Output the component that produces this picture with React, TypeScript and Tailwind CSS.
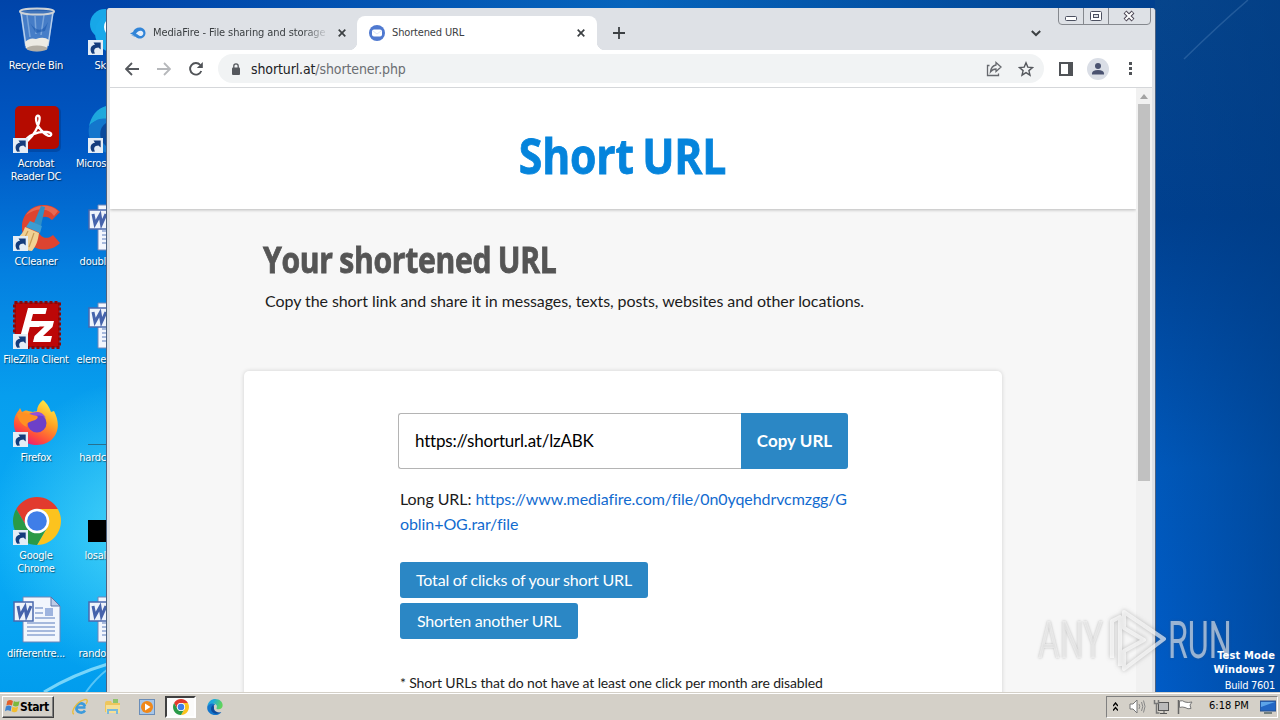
import React from 'react';

const ShortcutArrow = () => (
    <svg className="absolute bottom-0 left-0 h-[15px] w-[15px]" viewBox="0 0 15 15">
        <rect width="15" height="15" fill="#e4edf6" />
        <path d="M4.200 13.800C1 9.500 3 5 7 4.800L5.500 2.400h7.200v7l-2.300-2C6.500 7.500 5.200 10 7 13.400z" fill="#143c7c" />
    </svg>
);

const RecycleBinIcon = () => (
    <svg className="h-12 w-12" viewBox="0 0 48 48">
        <path d="M7 4l5 37q12 7 23 0l6-37z" fill="#7fa9dc" fillOpacity=".55" />
        <path d="M8 5l5 34" stroke="#b7cfec" strokeWidth="1.500" fill="none" />
        <path d="M40 5l-5 34" stroke="#b7cfec" strokeWidth="1.500" fill="none" />
        <path d="M14 8l3 22M22 9l1 18M31 8l-3 20" stroke="#9dc0e8" strokeWidth="1.500" opacity=".6" />
        <path d="M17 16c7 9 13 9 18-1l-3 9-9 2z" fill="#1f5cb0" opacity=".65" />
        <path d="M12 35q5-5 11-3 8-3 13 1l-2 8q-11 6-21 0z" fill="#eceae3" />
        <ellipse cx="24" cy="41.500" rx="10.500" ry="3" fill="#b3aea4" />
        <ellipse cx="24" cy="4.500" rx="17" ry="3" fill="#3f70b4" fillOpacity=".7" stroke="#cdd2d6" strokeWidth="2" />
    </svg>
);

const AcrobatIcon = () => (
    <svg className="h-12 w-12" viewBox="0 0 48 48">
        <rect x="3" y="2" width="45" height="45" rx="5" fill="#00337e" opacity=".4" />
        <rect x="2" y="1" width="44" height="43" rx="5" fill="#b50b00" />
        <path
            d="M12 36c2-5 13-10 22-9 6 .6 5 5 1 3.600C29 28 23 20 23 13.500c.3-4.500 4-3.500 3.600.5C26 22 20 31 14.500 36z"
            fill="none"
            stroke="#fff"
            strokeWidth="2.300"
            strokeLinejoin="round"
        />
    </svg>
);

const CCleanerIcon = () => (
    <svg className="h-12 w-12" viewBox="0 0 48 48">
        <path d="M47 9C36-4 10 1 9 23c-1 23 26 30 38 17l-7-8c-7 6-15 2-15-8 0-11 8-13 14-7z" fill="#dd4430" />
        <path d="M45 8C37 0 20 1 13 12c9-7 22-8 28 1z" fill="#ef8068" opacity=".6" />
        <path d="M28 3l4 1-4 19-7-3z" fill="#2f8fc7" />
        <path d="M17 18l12 5-2 7-14-6z" fill="#3c9dd3" />
        <path d="M12 24l14 6c-1 8-3 13-7 18-7 0-14-5-18-12 6-2 9-6 11-12z" fill="#f1d193" />
        <path d="M15 28l-6 12M21 30l-5 14" stroke="#c79a55" strokeWidth="1.200" />
    </svg>
);

const FileZillaIcon = () => (
    <svg className="h-12 w-12" viewBox="0 0 48 48">
        <rect x="1.500" y="1.500" width="45" height="45" fill="#b40808" stroke="#8d0606" strokeWidth="3" strokeDasharray="3 2" />
        <rect x="3" y="3" width="42" height="42" fill="#bc0707" />
        <path d="M15 7h19l-1.500 6H20l-1.800 7h9.500l-1.500 6h-9.400L13 40H6z" fill="#fff" />
        <path d="M25 20h16l-1.500 6-9.500 9h9l-1.500 6H20l1.500-6 10-9.500h-8z" fill="#fff" />
    </svg>
);

const FirefoxIcon = () => (
    <svg className="h-12 w-12" viewBox="0 0 48 48">
        <defs>
            <linearGradient id="ff-body" x1="0.8" y1="0" x2="0.250" y2="1">
                <stop offset="0" stopColor="#fff04a" />
                <stop offset=".4" stopColor="#ffa423" />
                <stop offset=".75" stopColor="#ff4c3c" />
                <stop offset="1" stopColor="#e3157f" />
            </linearGradient>
        </defs>
        <path
            d="M30 1c5 4 7 9 8 12l3-1c10 19-1 34-17 34C9 46 0 35 1 22c.5-4 2-8 5-11l1-2 2 4c2-1 4-2 6-1l5 1c2-1 3 0 4-1 0-4 2-8 6-11z"
            fill="url(#ff-body)"
        />
        <circle cx="24" cy="24" r="9.500" fill="#6d40c8" />
        <path d="M16 15c7-3 13-3 17 4-4-3-8-3-12-1z" fill="#9450d8" />
        <path d="M4 15c8-3 14 1 20 2 2 1 0 4-5 5-5 2-6 3-5 6C8 26 5 20 4 15z" fill="#ff9022" />
    </svg>
);

const ChromeIcon = ({ className }: { className: string }) => (
    <svg className={className} viewBox="0 0 48 48">
        <path d="M24 12h20.780A24 24 0 0 0 3.220 12l10.390 18A12 12 0 0 1 24 12z" fill="#e23b2e" />
        <path d="M34.390 30L24 48a24 24 0 0 0 20.780-36H24a12 12 0 0 1 10.390 18z" fill="#fcc31e" />
        <path d="M13.610 30L3.220 12A24 24 0 0 0 24 48l10.390-18a12 12 0 0 1-20.780 0z" fill="#2a9a47" />
        <circle cx="24" cy="24" r="12.300" fill="#fff" />
        <circle cx="24" cy="24" r="9.800" fill="#3f7ee8" />
    </svg>
);

const EdgeIcon = ({ className }: { className: string }) => (
    <svg className={className} viewBox="0 0 48 48">
        <defs>
            <linearGradient id="edge-top" x1="0" y1="0" x2="1" y2="0.300">
                <stop offset="0" stopColor="#1aa4de" />
                <stop offset=".4" stopColor="#1fa9dd" />
                <stop offset="1" stopColor="#5fd45c" />
            </linearGradient>
        </defs>
        <path d="M1 22C3 8 13 0 25 0c13 0 22 9 22 19 0 8-6 12-12 12-5 0-8-2-6-5 3-6-2-12-9-12C11 14 3 17 1 22z" fill="url(#edge-top)" />
        <path d="M1 22c4-8 17-12 24-5-9 1-12 10-9 17 4 9 16 12 27 5C34 52 14 51 5 39 1 34 0 28 1 22z" fill="#1376cc" />
        <path d="M20 17c-9 4-10 15-4 22 7 8 19 6 27 0-11 4-24-3-22-14z" fill="#0c4a9c" />
    </svg>
);

const WordDocIcon = () => (
    <svg className="h-12 w-12" viewBox="0 0 48 48">
        <path d="M10 2h28l9 9v36H10z" fill="#f2f6fd" stroke="#6e86b8" />
        <path d="M38 2v9h9z" fill="#bccbe6" stroke="#5a74a8" />
        <path d="M14 28h28M14 32h28M14 36h28M14 40h28M22 13h8M22 18h8M22 23h20" stroke="#8da5d2" strokeWidth="1.300" />
        <rect x="32" y="13" width="8" height="8" fill="#9eb4df" />
        <rect x="1" y="7" width="19" height="19" fill="#eef3fb" stroke="#4a68ad" strokeWidth="1.500" />
        <path d="M5 11l2 10L12 12l1.500 9L18 11" fill="none" stroke="#4563ac" strokeWidth="3" />
    </svg>
);

const SkypeIcon = () => (
    <svg className="h-12 w-12" viewBox="0 0 48 48">
        <circle cx="17" cy="17" r="15" fill="#17a7e8" />
        <circle cx="27" cy="26" r="20" fill="#18a9ea" />
        <circle cx="26" cy="20" r="8" fill="none" stroke="#fff" strokeWidth="4" />
    </svg>
);

interface DesktopItemProps {
    label: string;
    icon: React.ReactNode;
    className: string;
    shortcut?: boolean;
}

const DesktopItem: React.FC<DesktopItemProps> = ({ label, icon, className, shortcut }) => (
    <div className={`absolute flex w-[76px] flex-col items-center ${className}`}>
        <div className="relative ml-[2px] h-12 w-12">
            {icon}
            {shortcut && <ShortcutArrow />}
        </div>
        <span className="mt-1 whitespace-pre text-center text-[11px] leading-[13px] tracking-[-0.25px] [text-shadow:1px_1px_1px_rgba(0,0,0,0.5)]">
            {label}
        </span>
    </div>
);

// second column, cut off by the browser window
const ClippedItem: React.FC<Partial<DesktopItemProps>> = ({ label, icon, className, shortcut }) => (
    <div className={`absolute left-[76px] w-[30px] overflow-hidden ${className}`}>
        <div className="relative ml-3 h-12 w-12">
            {icon}
            {shortcut && <ShortcutArrow />}
        </div>
        <div className="mt-1 text-right text-[11px] leading-[13px] tracking-[-0.25px] [text-shadow:1px_1px_1px_rgba(0,0,0,0.5)]">
            {label}
        </div>
    </div>
);

const Wallpaper = () => (
    <svg className="absolute inset-0 h-[720px] w-[1280px]" viewBox="0 0 1280 720">
        <defs>
            <linearGradient id="wp-left" x1="0" y1="0" x2="0" y2="1">
                <stop offset="0" stopColor="#0044a9" />
                <stop offset=".2" stopColor="#0058c4" />
                <stop offset=".38" stopColor="#0480e0" />
                <stop offset=".55" stopColor="#079eee" />
                <stop offset=".75" stopColor="#0aacf6" />
                <stop offset="1" stopColor="#009aec" />
            </linearGradient>
            <radialGradient id="wp-glow" cx="140" cy="530" r="150" gradientUnits="userSpaceOnUse">
                <stop offset="0" stopColor="#5ae0f8" stopOpacity=".75" />
                <stop offset="1" stopColor="#5ae0f8" stopOpacity="0" />
            </radialGradient>
            <linearGradient id="wp-right" x1="0" y1="0" x2="0" y2="1">
                <stop offset="0" stopColor="#06458c" />
                <stop offset=".3" stopColor="#00408f" />
                <stop offset=".65" stopColor="#0058ba" />
                <stop offset="1" stopColor="#005cc8" />
            </linearGradient>
            <linearGradient id="wp-shade" x1="0" y1="0" x2="1" y2="0">
                <stop offset="0" stopColor="#003a80" stopOpacity="0" />
                <stop offset="1" stopColor="#003a80" stopOpacity=".5" />
            </linearGradient>
            <linearGradient id="wp-top" x1="0" y1="0" x2="1" y2="0">
                <stop offset="0" stopColor="#0044a9" />
                <stop offset=".5" stopColor="#0664bc" />
                <stop offset="1" stopColor="#00408f" />
            </linearGradient>
        </defs>
        <rect width="640" height="720" fill="url(#wp-left)" />
        <rect width="300" height="720" fill="url(#wp-glow)" />
        <rect x="640" width="640" height="720" fill="url(#wp-right)" />
        <rect x="1155" width="125" height="720" fill="url(#wp-shade)" />
        <rect x="106" width="1049" height="8" fill="url(#wp-top)" />
        <path d="M1184 59Q1220 24 1248 0" stroke="#4f83b8" strokeWidth="1.500" opacity=".4" fill="none" />
        <path d="M44 692Q74 674 108 664" stroke="#a8ecff" strokeWidth="3" opacity=".7" fill="none" />
        <path d="M86 692Q96 678 108 669" stroke="#a8ecff" strokeWidth="2" opacity=".5" fill="none" />
    </svg>
);

const CloseX = ({ className }: { className: string }) => (
    <svg className={className} viewBox="0 0 8 8">
        <path d="M.7.7l6.600 6.600M7.300.7L.7 7.300" stroke="#3c4043" strokeWidth="1.700" />
    </svg>
);

const TabStrip = () => (
    <div className="flex h-[42px] items-start bg-[#dee1e6] pl-[23px]">
        <div className="mt-2 flex h-[34px] w-[227px] items-center">
            <svg className="h-4 w-4 shrink-0" viewBox="0 0 16 16">
                <path d="M0 8.500l3-1.500C4 4 6.500 2.500 9.500 2.500c3.800 0 6 2.600 6 5.500s-2.200 5.500-5.500 5.500c-2 0-3.500-.6-4.500-1.800L1 10.500h3.500z" fill="#3285d8" />
                <path d="M6 9c1-3 5-4.500 7-2 1 2-.5 4-2.500 4S8 9 6 9z" fill="#e4eefa" />
            </svg>
            <div className="ml-[7px] w-[173px] whitespace-nowrap text-[11px] tracking-[-0.1px] text-[#3c4043] [mask-image:linear-gradient(to_right,black_150px,transparent_176px)]">
                MediaFire - File sharing and storage
            </div>
            <CloseX className="ml-3 h-2 w-2 shrink-0" />
        </div>
        <div className="relative mt-2 flex h-[34px] w-[240px] items-center rounded-t-lg bg-white pl-3 before:absolute before:bottom-0 before:-left-2 before:h-2 before:w-2 before:bg-[radial-gradient(circle_at_0_0,transparent_8px,white_8.5px)] after:absolute after:-right-2 after:bottom-0 after:h-2 after:w-2 after:bg-[radial-gradient(circle_at_100%_0,transparent_8px,white_8.5px)]">
            <svg className="h-4 w-4" viewBox="0 0 16 16">
                <circle cx="8" cy="8" r="8" fill="#4f79d0" />
                <rect x="3" y="4.500" width="10" height="7" rx="2" fill="#fff" />
                <path d="M4 6l4 3 4-3" stroke="#dbe4f6" fill="none" />
            </svg>
            <span className="ml-[7px] text-[11px] tracking-[-0.15px] text-[#3c4043]">Shortened URL</span>
            <CloseX className="mr-3 ml-auto h-2 w-2" />
        </div>
        <svg className="mt-[19px] ml-4 h-3 w-3" viewBox="0 0 12 12">
            <path d="M6 0v12M0 6h12" stroke="#3c4043" strokeWidth="1.800" />
        </svg>
        <svg className="mt-[22px] ml-[406px] h-[7px] w-[10px]" viewBox="0 0 10 7">
            <path d="M.8 1l4.200 4 4.200-4" stroke="#3c4043" strokeWidth="2" fill="none" />
        </svg>
        <svg className="ml-[17px] h-[17px] w-[93px]" viewBox="0 0 93 17">
            <path d="M.5 0v13q0 3.500 3.500 3.500h85q3.500 0 3.500-3.500V0M25.500 0v16M50.500 0v16" fill="#dee1e6" stroke="#85888e" />
            <rect x="7.500" y="8.500" width="11" height="4" rx="1" fill="#fff" stroke="#4c5060" />
            <rect x="32.500" y="3.500" width="11" height="9" rx="1" fill="#fff" stroke="#4c5060" />
            <rect x="35.500" y="6.500" width="5" height="3" fill="#dee1e6" stroke="#4c5060" />
            <path d="M67 4l8 8M75 4l-8 8" stroke="#4c4654" strokeWidth="4" />
            <path d="M67.500 4.500l7 7M74.500 4.500l-7 7" stroke="#fff" strokeWidth="2" />
        </svg>
    </div>
);

const Toolbar = () => (
    <div className="mx-[3px] flex h-[38px] items-center border-b border-[#d5d7da] bg-white text-[#5f6368]">
        <svg className="ml-[15px] h-[14px] w-[14px]" viewBox="0 0 14 14">
            <path d="M14 7H1.500M7 1L1 7l6 6" stroke="#55585d" strokeWidth="1.800" fill="none" />
        </svg>
        <svg className="ml-[18px] h-[14px] w-[14px]" viewBox="0 0 14 14">
            <path d="M0 7h12.500M7 1l6 6-6 6" stroke="#b6b8bb" strokeWidth="1.800" fill="none" />
        </svg>
        <svg className="ml-[18px] h-[14px] w-[14px]" viewBox="0 0 14 14">
            <path d="M12.300 9A5.800 5.800 0 1 1 11.300 3" stroke="#505357" strokeWidth="1.900" fill="none" />
            <path d="M13.800 0v6H7.800z" fill="#505357" />
        </svg>
        <div className="ml-[15px] flex h-[29px] w-[826px] items-center rounded-full bg-[#f1f3f4]">
            <svg className="ml-[14px] h-3 w-2" viewBox="0 0 8 12">
                <rect y="4.500" width="8" height="7.500" rx="1" fill="#55585d" />
                <path d="M1.800 5V3a2.200 2.200 0 0 1 4.400 0v2" stroke="#55585d" strokeWidth="1.300" fill="none" />
            </svg>
            <span className="ml-[11px] text-sm tracking-[-0.12px] text-[#6b6e72]">
                <span className="text-[#202124]">shorturl.at</span>/shortener.php
            </span>
            <svg className="ml-auto h-4 w-4" viewBox="0 0 16 16">
                <path d="M3.500 4.500H1.500v10h11v-2" stroke="#66696e" strokeWidth="1.300" fill="none" />
                <path d="M10 1.500L15 6l-5 4.500V8C7.500 8 6 8.800 4.500 10.800 5 7 7 4.500 10 4z" stroke="#66696e" strokeWidth="1.300" fill="none" />
            </svg>
            <svg className="mr-[10px] ml-4 h-4 w-4" viewBox="0 0 16 16">
                <path d="M8 1.800l1.800 4.300 4.700.4-3.600 3.100 1.100 4.600L8 11.700l-4 2.500 1.100-4.600L1.500 6.500l4.700-.4z" stroke="#55585d" strokeWidth="1.400" fill="none" />
            </svg>
        </div>
        <svg className="ml-[15px] h-[14px] w-[14px]" viewBox="0 0 14 14">
            <rect x="1" y="1" width="12" height="12" fill="#fff" stroke="#505357" strokeWidth="2" />
            <rect x="9" y="0" width="5" height="14" fill="#505357" />
        </svg>
        <svg className="ml-[14px] h-[22px] w-[22px]" viewBox="0 0 22 22">
            <circle cx="11" cy="11" r="11" fill="#dadee6" />
            <circle cx="11" cy="8" r="3" fill="#4a5270" />
            <path d="M5 16.500v-1q0-3.500 6-3.500t6 3.500v1z" fill="#4a5270" />
        </svg>
        <svg className="ml-5 h-[13px] w-[3px]" viewBox="0 0 3 13">
            <path d="M0 0h3v3H0zM0 5h3v3H0zM0 10h3v3H0z" fill="#505357" />
        </svg>
    </div>
);

const ShortenerPage = () => (
    <main className="h-[604px] w-[1026px] overflow-hidden bg-[#f7f7f7] font-['Lato',sans-serif] text-[#1c1c1c] [font-variant-ligatures:none]">
        <header className="flex h-[121px] justify-center bg-white pt-[35px] shadow-[0_1px_3px_rgba(0,0,0,0.25)]">
            <h1 className="scale-x-[0.89] font-['Open_Sans',sans-serif] text-[48px] leading-[66px] font-bold tracking-[-0.2px] whitespace-nowrap text-[#0584dc] [-webkit-text-stroke:0.8px_#0584dc] [word-spacing:-3px]">
                Short URL
            </h1>
        </header>
        <section className="h-[162px] pt-[27px] pl-[153px]">
            <h2 className="origin-left scale-x-[0.86] font-['Open_Sans',sans-serif] text-[35px] leading-[48px] font-bold tracking-[-0.35px] whitespace-nowrap text-[#555] [-webkit-text-stroke:0.8px_#555] [word-spacing:-1px]">
                Your shortened URL
            </h2>
            <p className="mt-1 ml-[2px] text-[16px] leading-[26px] tracking-[-0.07px] whitespace-nowrap">
                Copy the short link and share it in messages, texts, posts, websites and other locations.
            </p>
        </section>
        <section className="mx-auto h-[340px] w-[758px] rounded-[5px] bg-white px-[154px] pt-[42px] shadow-[0_0_4px_rgba(0,0,0,0.16)]">
            <div className="flex h-14 w-[450px]">
                <div className="flex w-[343px] items-center rounded-l-[3px] border border-r-0 border-[#b4b4b4] pl-4 text-[17px] tracking-[-0.2px] text-black">
                    https://shorturl.at/lzABK
                </div>
                <button className="w-[107px] rounded-r-[3px] bg-[#2b87c5] text-[17px] font-bold text-white">Copy URL</button>
            </div>
            <div className="mt-[17px] ml-[2px] text-[16px] leading-[25px] tracking-[-0.08px] whitespace-nowrap">
                Long URL:{' '}
                <a className="text-[#126bcf]">
                    https://www.mediafire.com/file/0n0yqehdrvcmzgg/G
                    <br />
                    oblin+OG.rar/file
                </a>
            </div>
            <div className="mt-[26px] ml-[2px] flex flex-col items-start gap-[5px] text-[16px] tracking-[-0.2px] text-white">
                <button className="h-9 w-[248px] rounded-[3px] bg-[#2b87c5] whitespace-nowrap">Total of clicks of your short URL</button>
                <button className="h-9 w-[178px] rounded-[3px] bg-[#2b87c5] whitespace-nowrap">Shorten another URL</button>
            </div>
            <p className="mt-[32px] ml-[2px] text-[14px] leading-[24px] tracking-[-0.14px] whitespace-nowrap">
                * Short URLs that do not have at least one click per month are disabled
            </p>
        </section>
    </main>
);

const BrowserWindow = () => (
    <div className="absolute top-[8px] left-[106px] flex h-[684px] w-[1050px] flex-col overflow-hidden rounded-t-[4px] border-x border-[#4d6280] bg-[#dee1e6]">
        <TabStrip />
        <Toolbar />
        <div className="mx-[3px] flex">
            <ShortenerPage />
            <div className="flex h-[604px] flex-1 flex-col items-center bg-[#f1f1f1]">
                <svg className="mt-[6px] h-[5px] w-2" viewBox="0 0 8 5">
                    <path d="M4 0l4 5H0z" fill="#a3a3a3" />
                </svg>
                <div className="mt-[5px] h-[377px] w-3 bg-[#c1c1c1]" />
            </div>
        </div>
    </div>
);

const Taskbar = () => (
    <footer className="absolute top-[692px] left-0 flex h-7 w-full items-center border-t border-[#d4d0c8] bg-[#d4d0c8] shadow-[inset_0_1px_0_white]">
        <div className="ml-[2px] flex h-[22px] w-[52px] items-center border border-t-white border-r-[#404040] border-b-[#404040] border-l-white pl-px text-black shadow-[inset_-1px_-1px_0_#808080]">
            <svg className="h-[15px] w-4 shrink-0" viewBox="0 0 16 16">
                <path d="M3 2q3-2 6 0L8 7Q5 5 2 7z" fill="#e2602a" />
                <path d="M10 2q3 2 6 0l-1 5q-3 2-6 0z" fill="#7cb83d" />
                <path d="M1.500 8q3-2 6 0l-1 5q-3-2-6 0z" fill="#3c83d1" />
                <path d="M8.500 8q3 2 6 0l-1 5q-3 2-6 0z" fill="#f3bd2d" />
            </svg>
            <span className="text-[12px] leading-4 font-bold tracking-[-0.4px]">Start</span>
        </div>
        <svg className="ml-[17px] h-[18px] w-[18px]" viewBox="0 0 18 18">
            <path d="M14.500 9.500H5.500a4.400 4.400 0 0 1 8.500-1.300M14 12.500a4.700 4.700 0 0 1-8.600-3" stroke="#3d9bdc" strokeWidth="2.600" fill="none" />
            <path d="M3 16C-1 15 5 4 13 1.800c4-1 4 1.500 2 4.200" stroke="#e9bd3d" strokeWidth="1.400" fill="none" />
        </svg>
        <svg className="ml-[15px] h-[18px] w-[18px]" viewBox="0 0 18 18">
            <path d="M1 5q0-2 2-2h4l1 2h8v9H1z" fill="#edc65d" />
            <path d="M2 7h14v8H2z" fill="#f6df96" />
            <path d="M3 16v-5h11v5h-2v-3H5v3z" fill="#79b9dc" />
            <path d="M9 1h5v4H9z" fill="#8fc56c" />
        </svg>
        <svg className="ml-[17px] h-4 w-4" viewBox="0 0 16 16">
            <rect x=".5" y=".5" width="15" height="15" fill="#a7c6e8" stroke="#6a8db8" />
            <circle cx="8" cy="8" r="6" fill="#f08819" />
            <path d="M6 4.500l5.500 3.500L6 11.500z" fill="#fff" />
        </svg>
        <div className="ml-[10px] flex h-[22px] w-[31px] items-center justify-center border-2 border-t-[#404040] border-r-white border-b-white border-l-[#404040] bg-[#fbfbfa]">
            <ChromeIcon className="h-4 w-4" />
        </div>
        <EdgeIcon className="ml-[11px] h-4 w-4" />
        <div className="mr-[2px] ml-auto flex h-[22px] w-[172px] items-center border border-t-[#808080] border-r-white border-b-white border-l-[#808080] text-black">
            <svg className="ml-[6px] h-[9px] w-[5px]" viewBox="0 0 5 9">
                <path d="M0 4l2.500-3L5 4M0 8.500l2.500-3 2.500 3" stroke="#000" strokeWidth="1.400" fill="none" />
            </svg>
            <svg className="ml-[11px] h-[15px] w-[17px]" viewBox="0 0 17 15">
                <path d="M1 5h3l4-4v13l-4-4H1z" fill="#fff" stroke="#777" />
                <path d="M10 5q1.500 2.500 0 5M12.500 3q2.500 4.500 0 9M14.500 1.500q3 6 0 12" stroke="#888" fill="none" />
            </svg>
            <svg className="ml-[7px] h-4 w-[17px]" viewBox="0 0 17 16">
                <rect x="5.500" y="3.500" width="10" height="8" fill="#bbb" stroke="#555" />
                <path d="M7 14.500h7M11 12v2" stroke="#555" />
                <path d="M1.500 1v3.500h4V1M3.500 5v9h3" stroke="#777" strokeWidth="1.500" fill="none" />
            </svg>
            <svg className="ml-[7px] h-4 w-4" viewBox="0 0 16 16">
                <path d="M1.500 1v14" stroke="#666" strokeWidth="1.500" />
                <path d="M2.500 2q3-1 5.500 1 3 1 7 0l-2 3 1 3.500q-3 1-6-1-3-1-5.500 0z" fill="#fff" stroke="#777" />
            </svg>
            <span className="ml-4 text-[11px] whitespace-nowrap">6:18 PM</span>
            <svg className="mr-px ml-auto h-[14px] w-4" viewBox="0 0 16 14">
                <path d="M0 1h16v10H0z" fill="#2267c4" stroke="#28508c" />
                <path d="M1 2h14L1 7z" fill="#5ca4e8" />
                <path d="M4 13h8" stroke="#566" strokeWidth="1.500" />
            </svg>
        </div>
    </footer>
);

const Watermark = () => (
    <div className="absolute top-[607px] left-[1038px] flex h-[68px] w-[194px] items-center font-['Roboto',sans-serif] text-[52px] leading-none text-white/55 [text-shadow:0_0_3px_rgba(90,90,90,0.4)]">
        <div className="w-[66px]">
            <span className="inline-block origin-left scale-x-[0.64]">ANY</span>
        </div>
        <svg className="h-[66px] w-[58px] shrink-0 overflow-visible drop-shadow-[0_0_2px_rgba(70,70,70,0.5)]" viewBox="0 0 58 66">
            <path d="M8 50V13l8-4v49M20 4l40 27-40 30V43l20-11-20-12z" fill="none" stroke="#fff" strokeOpacity=".65" strokeWidth="4" strokeLinejoin="round" />
        </svg>
        <div className="ml-[6px] w-[62px]">
            <span className="inline-block origin-left scale-x-[0.62]">RUN</span>
        </div>
    </div>
);

export default function App() {
    return (
        <div className="relative h-[720px] w-[1280px] overflow-hidden bg-[#0054b4] font-['DejaVu_Sans_Condensed','DejaVu_Sans',sans-serif] text-white">
            <Wallpaper />
            <DesktopItem className="top-[7px] left-[-2px]" label="Recycle Bin" icon={<RecycleBinIcon />} />
            <DesktopItem className="top-[105px] left-[-2px]" label={'Acrobat\nReader DC'} icon={<AcrobatIcon />} shortcut />
            <DesktopItem className="top-[203px] left-[-2px]" label="CCleaner" icon={<CCleanerIcon />} shortcut />
            <DesktopItem className="top-[301px] left-[-2px]" label="FileZilla Client" icon={<FileZillaIcon />} shortcut />
            <DesktopItem className="top-[399px] left-[-2px]" label="Firefox" icon={<FirefoxIcon />} shortcut />
            <DesktopItem className="top-[497px] left-[-2px]" label={'Google\nChrome'} icon={<ChromeIcon className="h-12 w-12" />} shortcut />
            <DesktopItem className="top-[595px] left-[-2px]" label="differentre..." icon={<WordDocIcon />} />

            <ClippedItem className="top-[7px]" label="Sk" icon={<SkypeIcon />} shortcut />
            <ClippedItem className="top-[105px]" label="Micros" icon={<EdgeIcon className="h-12 w-12" />} shortcut />
            <ClippedItem className="top-[203px]" label="doubl" icon={<WordDocIcon />} />
            <ClippedItem className="top-[301px]" label="eleme" icon={<WordDocIcon />} />
            <ClippedItem className="top-[399px]" label="hardc" icon={<div className="h-[46px] border-b border-[#27708f]" />} />
            <ClippedItem className="top-[497px]" label="losal" icon={<div className="h-full pt-[23px]"><div className="h-[22px] bg-black" /></div>} />
            <ClippedItem className="top-[595px]" label="rando" icon={<WordDocIcon />} />

            <BrowserWindow />
            <Watermark />
            <div className="absolute top-[649px] right-[5px] text-right text-[11px] whitespace-nowrap">
                <div className="leading-[14px] font-bold tracking-[0.15px]">Test Mode</div>
                <div className="leading-[14px] font-bold tracking-[0.1px]">Windows 7</div>
                <div className="leading-[17px] tracking-[-0.3px]">Build 7601</div>
            </div>
            <Taskbar />
        </div>
    );
}
